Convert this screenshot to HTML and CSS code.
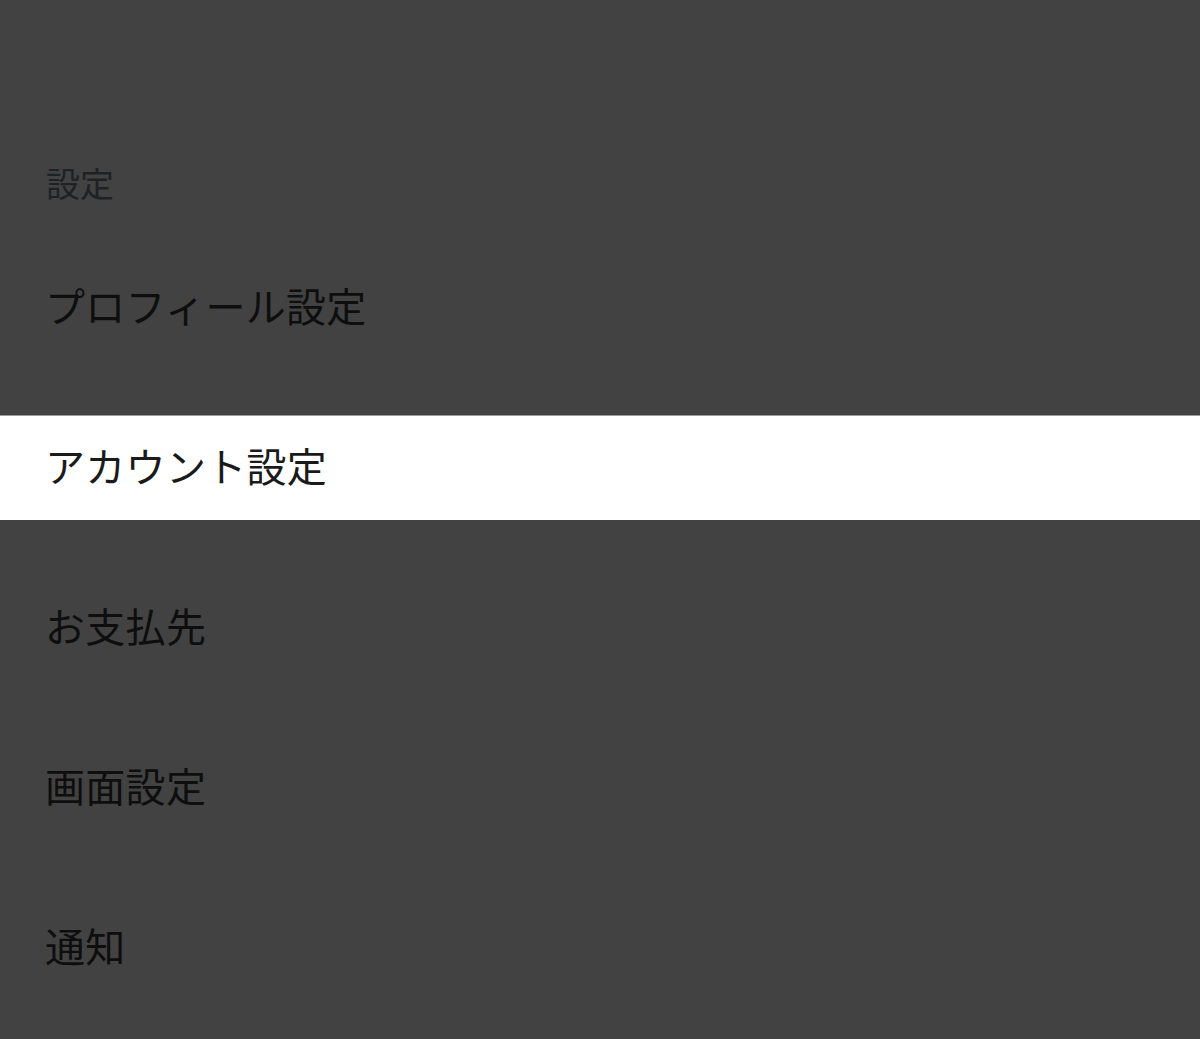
FILE: index.html
```html
<!DOCTYPE html>
<html lang="ja">
  <head>
    <meta charset="UTF-8" />
    <meta name="viewport" content="width=device-width, initial-scale=1.0" />
    <title>設定</title>
    <link rel="stylesheet" href="styles.css">
  </head>
  <body>
    <div class="settings">
      <h1 class="settings-title">設定</h1>
      <ul class="menu">
        <li class="menu-item">プロフィール設定</li>
        <li class="menu-item active">アカウント設定</li>
        <li class="menu-item">お支払先</li>
        <li class="menu-item">画面設定</li>
        <li class="menu-item">通知</li>
      </ul>
    </div>
  </body>
</html>
```

FILE: styles.css
```css
body {
  margin: 0;
  background-color: #424242;
  font-family: "Noto Sans CJK JP", "Noto Sans", sans-serif;
  height: 100vh;
}

.settings {
  padding-top: 159px;
}

.settings-title {
  margin: 0 0 48px;
  padding-left: 46px;
  font-size: 34px;
  font-weight: normal;
  line-height: 48px;
  color: #1e2225;
}

.menu {
  list-style: none;
  margin: 0;
  padding: 0;
  display: flex;
  flex-direction: column;
  gap: 55px;
}

.menu-item {
  height: 105px;
  display: flex;
  align-items: center;
  padding-left: 45px;
  padding-bottom: 6px;
  font-size: 40px;
  letter-spacing: 0.3px;
  color: #0e0e0e;
  box-sizing: border-box;
}

.menu-item.active {
  background-color: #fff;
  color: #1a1a1a;
  border-top: 1px solid #9a9a9a;
}
```
